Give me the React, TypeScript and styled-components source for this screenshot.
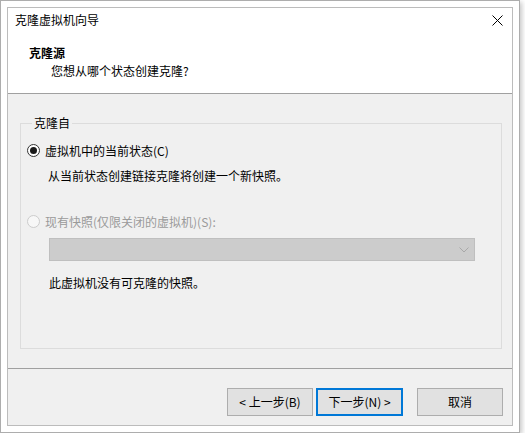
import React from "react";
import styled, { createGlobalStyle } from "styled-components";

const Global = createGlobalStyle`
  html, body { margin: 0; padding: 0; background: #ffffff; }
  body {
    font-family: "Noto Sans CJK SC", "Noto Sans", "Liberation Sans", sans-serif;
    font-size: 12px;
    color: #000;
  }
  * { box-sizing: border-box; }
`;

const Frame = styled.div`
  width: 520px;
  height: 433px;
  border: 1px solid #adadad;
  padding: 6px;
  background: #ffffff;
  box-shadow: 2px 2px 5px rgba(0, 0, 0, 0.22);
  display: flex;
`;

const Window = styled.div`
  flex: 1;
  border: 1px solid #bcbcbc;
  background: #f0f0f0;
  display: flex;
  flex-direction: column;
`;

const Header = styled.div`
  height: 86px;
  flex: none;
  background: #ffffff;
  border-bottom: 1px solid #a0a0a0;
  display: flex;
  flex-direction: column;
`;

const TitleRow = styled.div`
  display: flex;
  justify-content: space-between;
  align-items: center;
  padding: 4px 9px 0 7px;
  height: 20px;
`;

const Title = styled.div`
  line-height: 16px;
`;

const CloseIcon = styled.svg`
  width: 11px;
  height: 11px;
  display: block;
`;

const HeadBlock = styled.div`
  margin-top: 17px;
  padding-left: 21px;
`;

const Heading = styled.div`
  font-weight: bold;
  line-height: 16px;
`;

const SubHeading = styled.div`
  margin-top: 2px;
  margin-left: 22px;
  line-height: 16px;
`;

const Body = styled.div`
  height: 275px;
  flex: none;
  border-bottom: 1px solid #a0a0a0;
  padding: 21px 10px 0 12px;
`;

const Group = styled.fieldset`
  margin: 0;
  padding: 0 0 0 6px;
  border: 1px solid #dcdcdc;
  height: 234px;
`;

const Legend = styled.legend`
  margin-left: 5px;
  padding: 0 2px;
  line-height: 16px;
`;

const RadioRow = styled.div<{ $top: number; $disabled?: boolean }>`
  display: flex;
  align-items: center;
  gap: 5px;
  margin-top: ${(p) => p.$top}px;
  height: 16px;
  line-height: 16px;
  color: ${(p) => (p.$disabled ? "#9a9a9a" : "#000")};
`;

const RadioCircle = styled.span<{ $checked?: boolean; $disabled?: boolean }>`
  width: 13px;
  height: 13px;
  border-radius: 50%;
  border: 1px solid ${(p) => (p.$disabled ? "#cccccc" : "#333333")};
  background: ${(p) => (p.$disabled ? "#f7f7f7" : "#ffffff")};
  display: flex;
  align-items: center;
  justify-content: center;
  flex: none;
  margin-top: -2px;
  &::after {
    content: "";
    width: 7px;
    height: 7px;
    border-radius: 50%;
    background: ${(p) => (p.$checked ? "#1a1a1a" : "transparent")};
  }
`;

const Desc = styled.div<{ $top: number; $left: number }>`
  margin-top: ${(p) => p.$top}px;
  margin-left: ${(p) => p.$left}px;
  line-height: 16px;
`;

const Select = styled.div`
  margin-top: 8px;
  margin-left: 22px;
  width: 426px;
  height: 23px;
  background: #cccccc;
  border: 1px solid #bfbfbf;
  display: flex;
  align-items: center;
  justify-content: flex-end;
  padding-right: 5px;
`;

const Chevron = styled.svg`
  width: 10px;
  height: 6px;
  display: block;
`;

const Footer = styled.div`
  flex: 1;
  display: flex;
  justify-content: flex-end;
  align-items: flex-start;
  padding: 19px 9px 0 0;
`;

const Button = styled.button<{ $primary?: boolean; $gap: number }>`
  width: ${(p) => (p.$primary ? 87 : 86)}px;
  height: 28px;
  margin-left: ${(p) => p.$gap}px;
  background: #e1e1e1;
  border: ${(p) => (p.$primary ? "2px solid #0078d7" : "1px solid #adadad")};
  font-family: inherit;
  font-size: 12px;
  color: #000;
  padding: 0;
  line-height: 16px;
`;

export default function App() {
  return (
    <>
      <Global />
      <Frame>
        <Window>
          <Header>
            <TitleRow>
              <Title>克隆虚拟机向导</Title>
              <CloseIcon viewBox="0 0 11 11">
                <path d="M0.5 0.5 L10.5 10.5 M10.5 0.5 L0.5 10.5" stroke="#000" strokeWidth="1" fill="none" />
              </CloseIcon>
            </TitleRow>
            <HeadBlock>
              <Heading>克隆源</Heading>
              <SubHeading>您想从哪个状态创建克隆?</SubHeading>
            </HeadBlock>
          </Header>
          <Body>
            <Group>
              <Legend>克隆自</Legend>
              <RadioRow $top={12}>
                <RadioCircle $checked />
                <span>虚拟机中的当前状态(C)</span>
              </RadioRow>
              <Desc $top={9} $left={21}>从当前状态创建链接克隆将创建一个新快照。</Desc>
              <RadioRow $top={30} $disabled>
                <RadioCircle $disabled />
                <span>现有快照(仅限关闭的虚拟机)(S):</span>
              </RadioRow>
              <Select>
                <Chevron viewBox="0 0 10 6">
                  <path d="M0.5 0.5 L5 5 L9.5 0.5" stroke="#a8a8a8" strokeWidth="1" fill="none" />
                </Chevron>
              </Select>
              <Desc $top={14} $left={22}>此虚拟机没有可克隆的快照。</Desc>
            </Group>
          </Body>
          <Footer>
            <Button $gap={0}>&lt; 上一步(B)</Button>
            <Button $gap={3} $primary>下一步(N) &gt;</Button>
            <Button $gap={14}>取消</Button>
          </Footer>
        </Window>
      </Frame>
    </>
  );
}
